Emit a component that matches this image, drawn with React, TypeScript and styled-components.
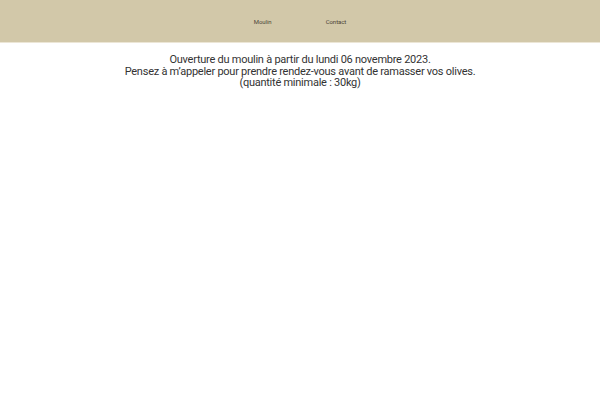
import React from "react";
import styled, { createGlobalStyle } from "styled-components";

const Global = createGlobalStyle`
  html, body { margin: 0; padding: 0; background: #ffffff; }
  body { font-family: Roboto, "Liberation Sans", Arial, sans-serif; }
`;

const Header = styled.header`
  height: 42px;
  background: #d2c8a9;
  border-bottom: 1px solid #ece6d6;
  display: flex;
  justify-content: center;
  align-items: center;
  gap: 54px;
`;

const NavLink = styled.a`
  font-family: Roboto, "Liberation Sans", Arial, sans-serif;
  font-size: 6px;
  letter-spacing: -0.05px;
  color: #4b4537;
  text-decoration: none;
`;

const Main = styled.main`
  padding-top: 11px;
  text-align: center;
  font-family: Roboto, "Liberation Sans", Arial, sans-serif;
  font-size: 11px;
  letter-spacing: -0.25px;
  line-height: 11.5px;
  color: #333333;
`;

const Line = styled.p`
  margin: 0;
`;

export default function App() {
  return (
    <>
      <Global />
      <Header>
        <NavLink href="#">Moulin</NavLink>
        <NavLink href="#">Contact</NavLink>
      </Header>
      <Main>
        <Line>Ouverture du moulin à partir du lundi 06 novembre 2023.</Line>
        <Line>Pensez à m’appeler pour prendre rendez-vous avant de ramasser vos olives.</Line>
        <Line>(quantité minimale : 30kg)</Line>
      </Main>
    </>
  );
}
